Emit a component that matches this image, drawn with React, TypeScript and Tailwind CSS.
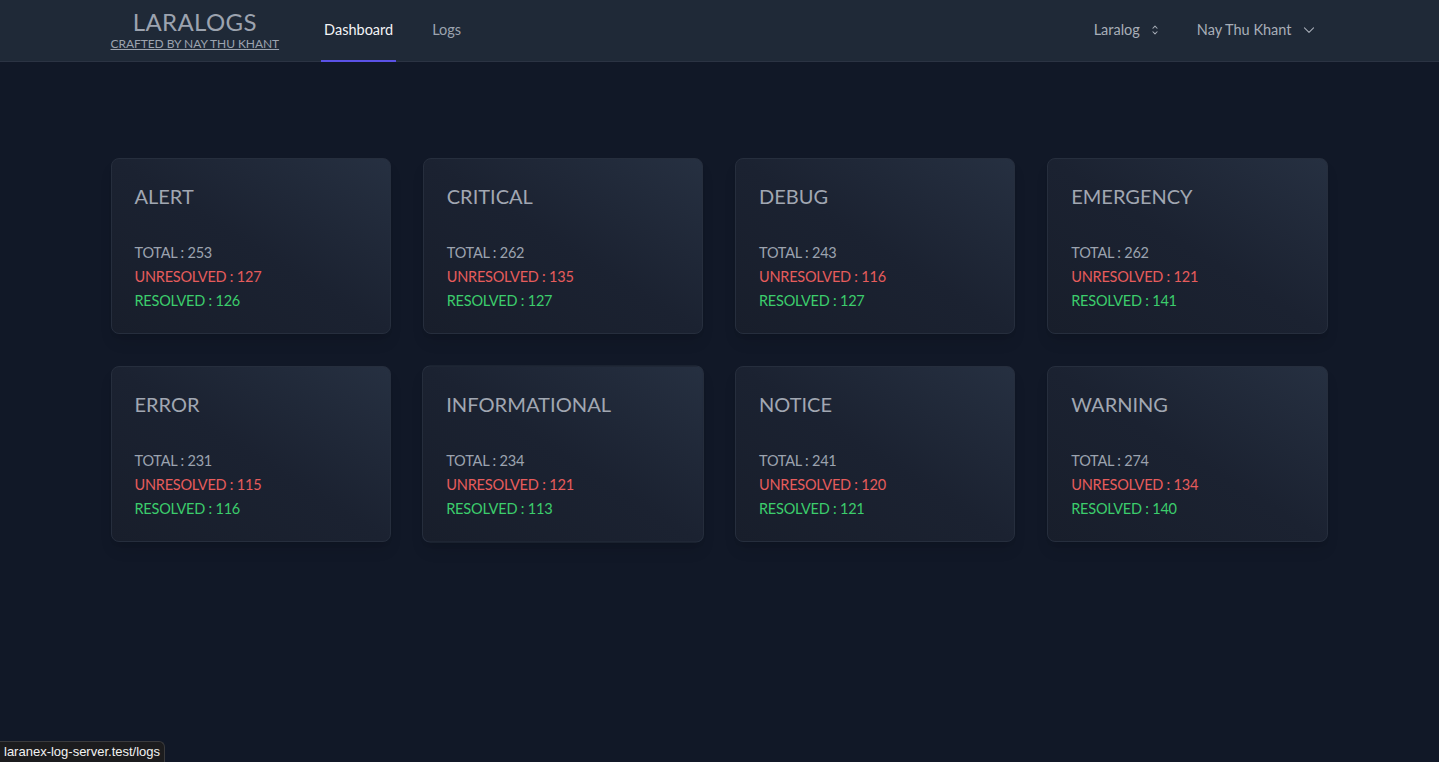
import React from "react";

type Stat = { name: string; total: number; unresolved: number; resolved: number; hover?: boolean };

const stats: Stat[] = [
  { name: "ALERT", total: 253, unresolved: 127, resolved: 126 },
  { name: "CRITICAL", total: 262, unresolved: 135, resolved: 127 },
  { name: "DEBUG", total: 243, unresolved: 116, resolved: 127 },
  { name: "EMERGENCY", total: 262, unresolved: 121, resolved: 141 },
  { name: "ERROR", total: 231, unresolved: 115, resolved: 116 },
  { name: "INFORMATIONAL", total: 234, unresolved: 121, resolved: 113, hover: true },
  { name: "NOTICE", total: 241, unresolved: 120, resolved: 121 },
  { name: "WARNING", total: 274, unresolved: 134, resolved: 140 },
];

function UpDown() {
  return (
    <svg width="14" height="14" viewBox="0 0 20 20" fill="none" stroke="currentColor" strokeWidth="1.5" strokeLinecap="round" strokeLinejoin="round">
      <path d="M7 7.5l3-3 3 3M7 12.5l3 3 3-3" />
    </svg>
  );
}

function ChevronDown() {
  return (
    <svg width="14" height="14" viewBox="0 0 20 20" fill="none" stroke="currentColor" strokeWidth="1.5" strokeLinecap="round" strokeLinejoin="round">
      <path d="M3.5 7l6.5 6.5 6.5-6.5" />
    </svg>
  );
}

function Card({ s }: { s: Stat }) {
  return (
    <div
      className={
        "rounded-lg border border-[#262e3d] bg-gradient-to-bl from-[#263041] via-[#1b2231] to-[#181e2b] pl-[23px] pr-6 pt-[23px] pb-[20px] shadow-lg " +
        (s.hover ? "scale-[1.007]" : "")
      }
    >
      <div className="text-[20px] leading-7 text-[#a1a7b2]">{s.name}</div>
      <div className="mt-[31px] text-[14.5px] tracking-[-0.015em] leading-6">
        <div className="text-[#9ca3af]">TOTAL : {s.total}</div>
        <div className="text-[#e65c5c]">UNRESOLVED : {s.unresolved}</div>
        <div className="text-[#3ccd6c]">RESOLVED : {s.resolved}</div>
      </div>
    </div>
  );
}

export default function App() {
  return (
    <div className="min-h-[762px] bg-[#111827] font-['Lato','Inter',sans-serif] relative">
      <nav className="bg-[#1f2937] border-b border-[#2b3343]">
        <div className="mx-auto max-w-7xl pl-[31px] pr-8 flex h-[61px] justify-between">
          <div className="flex">
            <div className="flex flex-col items-center justify-center pb-[4px]">
              <div className="text-[24px] leading-7 tracking-[0.015em] text-[#9ca3af] mt-[2px]">LARALOGS</div>
              <div className="text-[12px] leading-4 tracking-[-0.005em] text-[#9ca3af] underline">CRAFTED BY NAY THU KHANT</div>
            </div>
            <div className="ml-[42px] flex">
              <div className="flex items-center border-b-2 border-[#5b52e6] px-[3px] pb-[1px] text-[14.5px] text-[#f3f4f6] mb-[-1px]">Dashboard</div>
              <div className="ml-8 flex items-center px-1 pb-[1px] text-[14.5px] text-[#9ca3af]">Logs</div>
            </div>
          </div>
          <div className="flex items-center pb-[2px]">
            <button className="flex items-center gap-[8px] px-3 text-[14.5px] text-[#a8aeb8]">
              Laralog <UpDown />
            </button>
            <button className="ml-[11px] flex items-center gap-[10px] pl-3 pr-[12px] text-[14.5px] text-[#a8aeb8]">
              Nay Thu Khant <ChevronDown />
            </button>
          </div>
        </div>
      </nav>
      <main className="mx-auto max-w-7xl pl-[31px] pr-8 pt-24">
        <div className="grid grid-cols-4 gap-8">
          {stats.map((s) => (
            <Card key={s.name} s={s} />
          ))}
        </div>
      </main>
      <div className="absolute left-0 bottom-0 bg-[#1c1c1e] border-t border-r border-[#3a3a3c] rounded-tr-md px-1 py-[2px] text-[13px] leading-4 text-[#f2f2f2] font-['Liberation_Sans',sans-serif]">
        laranex-log-server.test/logs
      </div>
    </div>
  );
}
